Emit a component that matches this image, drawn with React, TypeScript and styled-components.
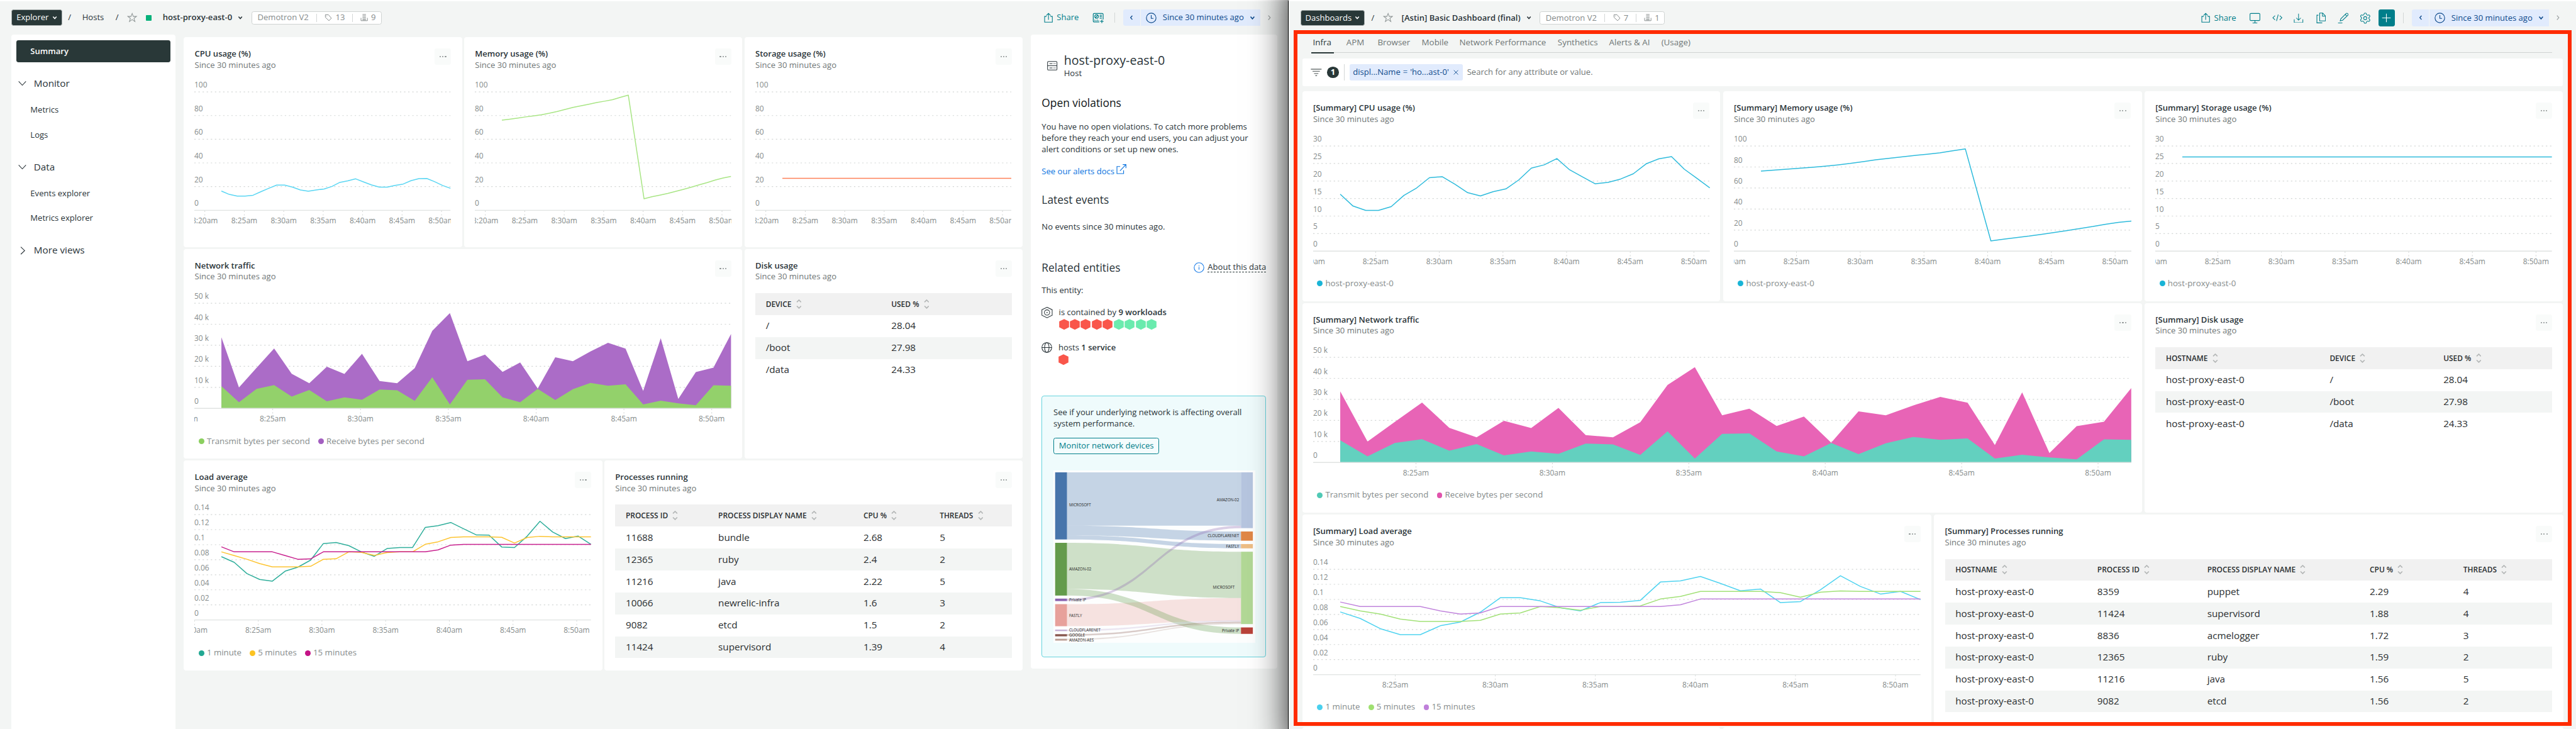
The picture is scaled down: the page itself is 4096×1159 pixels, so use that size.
import React from 'react';
import styled, { createGlobalStyle, css } from 'styled-components';
import { Settings } from 'lucide-react';

/* 1rem is ten design units; the design is 601.4rem wide. */
const Global = createGlobalStyle`
  html { font-size: 6.81077px; }
  body {
    margin: 0;
    font-family: 'Open Sans', 'Noto Sans', 'Liberation Sans', sans-serif;
    font-size: 1.92rem;
    line-height: 2.6rem;
    color: #293338;
    background: #f3f5f4;
  }
  * { box-sizing: border-box; }
  svg { display: block; flex: none; }
`;

const teal = '#007e8a';
const ink = '#293838';
const canvas = '#f3f5f4';

/* ---------- page shell ---------- */

const Page = styled.div`
  display: flex;
  width: 4096px;
  height: 1159px;
  overflow: hidden;
  background: ${canvas};
`;

const LeftWindow = styled.section`
  flex: none;
  width: 300.7rem;
  height: 100%;
  border-top: 0.4rem solid #fff;
  display: flex;
  flex-direction: column;
`;

const RightWindow = styled.section`
  position: relative;
  z-index: 1;
  width: 300.7rem;
  height: 100%;
  background: ${canvas};
  border-top: 0.4rem solid #fff;
  border-left: 1px solid #000;
  display: flex;
  flex-direction: column;
  &::before {
    content: '';
    position: absolute;
    z-index: -1;
    top: -5rem;
    bottom: -5rem;
    left: 0;
    right: 0;
    box-shadow: 0 0 8rem rgba(0, 0, 0, 0.88);
  }
  &::after {
    content: '';
    position: absolute;
    z-index: -1;
    inset: 0;
    background: ${canvas};
  }
`;

const Header = styled.header<{ $h: number; $pt?: number; $pl: number }>`
  flex: none;
  height: ${p => p.$h}rem;
  padding: ${p => p.$pt || 0}rem 0 0 ${p => p.$pl}rem;
  display: flex;
  align-items: center;
`;

const Slot = styled.div<{ $w: number; $strong?: boolean }>`
  flex: none;
  width: ${p => p.$w}rem;
  display: flex;
  align-items: center;
  white-space: nowrap;
  font-weight: ${p => (p.$strong ? 600 : 400)};
`;

const NavButton = styled.button<{ $w: number; $gap: number }>`
  flex: none;
  width: ${p => p.$w}rem;
  height: 3.8rem;
  margin-right: ${p => p.$gap}rem;
  padding: 0 1rem;
  display: flex;
  align-items: center;
  justify-content: space-between;
  font: inherit;
  color: #fff;
  background: ${ink};
  border: 0.16rem solid #a9b0b0;
  border-radius: 0.5rem;
`;

const Status = styled.i`
  width: 1.36rem;
  height: 1.3rem;
  background: #06b17a;
  border-radius: 0.15rem;
`;

const MetaBox = styled.div<{ $w: number }>`
  flex: none;
  width: ${p => p.$w}rem;
  height: 3.1rem;
  padding-left: 1.3rem;
  display: flex;
  align-items: center;
  color: #858b8b;
  background: #fff;
  border: 0.14rem solid #d0d4d3;
  border-radius: 0.5rem;
`;

const Rule = styled.i<{ $h: number; $slot: number }>`
  flex: none;
  width: 1px;
  height: ${p => p.$h}rem;
  margin-right: calc(${p => p.$slot}rem - 1px);
  background: #d3d7d6;
`;

const Tools = styled.div`
  margin-left: auto;
  display: flex;
  align-items: center;
  color: ${teal};
`;

const AddButton = styled.button`
  width: 3.8rem;
  height: 3.85rem;
  margin-right: 1.96rem;
  padding: 0;
  display: grid;
  place-items: center;
  color: #fff;
  background: ${teal};
  border: 0;
  border-radius: 0.5rem;
`;

const Picker = styled.div`
  width: 31.9rem;
  height: 3.9rem;
  display: flex;
  color: #0d4a8c;
  border-radius: 0.5rem 0 0 0.5rem;
  overflow: hidden;
`;
const PickerStep = styled.div`
  width: 3.85rem;
  margin-right: 0.2rem;
  display: grid;
  place-items: center;
  background: #e1ebfd;
`;
const PickerRange = styled.div`
  flex: 1;
  padding-left: 1.2rem;
  display: flex;
  align-items: center;
  background: #e1ebfd;
`;
const NextStep = styled.div<{ $w: number }>`
  width: ${p => p.$w}rem;
  padding-left: 1.5rem;
  color: #9a9f9f;
`;

/* ---------- icons ---------- */

type Ic = { w: number; h?: number; box?: string; sw?: number; children: React.ReactNode };
const Icon = ({ w, h, box = '0 0 24 24', sw = 1.6, children }: Ic) => (
  <svg width={`${w / 10}rem`} height={`${(h || w) / 10}rem`} viewBox={box} fill="none" stroke="currentColor" strokeWidth={sw}>
    {children}
  </svg>
);
const Caret = ({ w = 12 }) => (
  <Icon w={w} box="0 0 12 12" sw={2.2}><path d="M2 3.5l4 4.6 4-4.6" /></Icon>
);
const Star = () => (
  <Icon w={24} sw={1.5}><path d="M12 2l2.7 7h7.4l-6 4.6 2.3 7.4-6.4-4.6L5.6 21l2.3-7.4-6-4.6h7.4z" stroke="#8f9696" /></Icon>
);
const Tag = () => (
  <Icon w={18} box="0 0 18 18" sw={1.4}><path d="M2 2h7l7 8.2L10.4 16 2 8.2z" /><circle cx="5.4" cy="5.2" r=".8" fill="currentColor" stroke="none" /></Icon>
);
const Building = () => (
  <Icon w={18} box="0 0 18 18" sw={1.4}><path d="M5 1.5h8M5 4.8h8M5 8.1h8M5 11.4h8M1.5 9.5V16h15V9.5M5 14h8" /></Icon>
);
const Share = () => (
  <Icon w={21} h={24} box="0 0 21 24"><path d="M6 9H1.5v13.5h18V9H15M10.5 17V2M5.5 6.8l5-5 5 5" /></Icon>
);
const AddToDashboard = () => (
  <Icon w={27} h={25} box="0 0 27 25" sw={1.8}>
    <path d="M16 22H4a2 2 0 01-2-2V4a2 2 0 012-2h19a2 2 0 012 2v12M22 16.5v8M18 20.5h8M17 6h5M17 9.5h5M17 13h5M5.5 19.5v-3M8.5 19.5v-1.5M11.5 19.5v-3M14.5 19.5v-1.5" />
    <circle cx="9.7" cy="9" r="4.2" /><path d="M7 12l5.5-6" />
  </Icon>
);
const Clock = () => (
  <Icon w={25}><circle cx="12" cy="12" r="10.8" /><path d="M12 5.5V13h5" /></Icon>
);
const Monitor = () => (
  <Icon w={26} box="0 0 26 26"><rect x="1" y="2" width="23" height="16.5" rx="2" /><path d="M12.5 18.5V24M7 24.2h11" /></Icon>
);
const Code = () => (
  <Icon w={24}><path d="M6.5 7l-5 5 5 5M17.5 7l5 5-5 5M14 4.5l-4 15" /></Icon>
);
const Download = () => (
  <Icon w={23}><path d="M1.500 15v8h21v-8M12 1v16M6.500 11.500L12 17l5.500-5.500" /></Icon>
);
const Copy = () => (
  <Icon w={23} h={25} box="0 0 23 25"><path d="M8 1h7l6.500 7v11.500H8zM14.500 1v7.500h7M5 6H1.500v18H14" /></Icon>
);
const Pencil = () => (
  <Icon w={26} box="0 0 26 26"><path d="M6 19.500l1.500-5L20 2.200a2 2 0 013 0l1 1a2 2 0 010 2.800L11.500 18zM18 4.500l4 4M1 24.300h10" /></Icon>
);
const Plus = () => (
  <Icon w={22} box="0 0 22 22"><path d="M11 1v20M1 11h20" /></Icon>
);
const StepLeft = () => (
  <Icon w={12} box="0 0 12 12" sw={2}><path d="M8 1.500L4 6l4 4.500" /></Icon>
);
const StepRight = () => (
  <Icon w={12} box="0 0 12 12" sw={1.7}><path d="M4 1l4.500 5L4 11" /></Icon>
);
const GroupOpen = () => (
  <Icon w={19} box="0 0 19 19"><path d="M1 5l8.500 9L18 5" /></Icon>
);
const GroupClosed = () => (
  <Icon w={19} box="0 0 19 19"><path d="M6 1l9 8.500L6 18" /></Icon>
);
const HostIcon = () => (
  <Icon w={24} h={22} box="0 0 24 22" sw={1.5}>
    <rect x="1" y="1" width="22" height="20" rx="2" /><path d="M1 11h22M5.500 6.200h7M15 6.200h1.800M18 6.200h1.800M5.500 16h7M15 16h1.800M18 16h1.800" />
  </Icon>
);
const External = () => (
  <Icon w={24} sw={1.7}><path d="M9 5.500H1.500V22H17v-7.500M15 1h7.500v8M22.500 1L8.500 15.500" /></Icon>
);
const Info = () => (
  <Icon w={25}><circle cx="12" cy="12" r="10.900" /><path d="M12 10.500v6M12 7v1.800" /></Icon>
);
const Workload = () => (
  <Icon w={26} box="0 0 26 26" sw={1.5}><path d="M13 .8l12 5.700v13L13 25.200 1 19.500v-13z" /><circle cx="13" cy="13" r="6.200" /><circle cx="13" cy="13" r="1.400" fill="currentColor" stroke="none" /></Icon>
);
const Globe = () => (
  <Icon w={25} sw={1.5}><circle cx="12" cy="12" r="11" /><ellipse cx="12" cy="12" rx="5" ry="11" /><path d="M1 12h22" /></Icon>
);
const Hex = ({ color }: { color: string }) => (
  <svg width="2.36rem" height="2.56rem" viewBox="0 0 23.6 25.6"><path d="M11.800 .3l11.500 5.700v13.600l-11.500 5.700L.3 19.600V6z" fill={color} /></svg>
);
const Filter = () => (
  <Icon w={26} h={18} box="0 0 26 18" sw={1.9}><path d="M.5 1.500h25M4.500 6.500h17M8 11.500h10M11 16.500h4" /></Icon>
);
const Close = () => (
  <Icon w={12} box="0 0 12 12" sw={1.3}><path d="M1 1l10 10M11 1L1 11" /></Icon>
);
const Sort = () => (
  <Icon w={13} h={22} box="0 0 13 22" sw={2.4}><g stroke="#b3b6b6"><path d="M1.500 6.500l5-5 5 5M1.500 15.500l5 5 5-5" /></g></Icon>
);

/* ---------- cards ---------- */

const Row = styled.div<{ $h: number; $gap: number }>`
  flex: none;
  display: flex;
  height: ${p => p.$h}rem;
  gap: ${p => p.$gap}rem;
`;
const CardBox = styled.article<{ $w: number }>`
  flex: none;
  width: ${p => p.$w}rem;
  padding: 2.6rem 2.54rem 0;
  background: #fff;
  border-radius: 0.6rem;
  overflow: hidden;
`;
const CardHead = styled.div`
  height: 5.2rem;
  display: flex;
  justify-content: space-between;
`;
const CardTitle = styled.h3`
  margin: 0;
  font-size: 1.92rem;
  font-weight: 600;
`;
const CardSub = styled.div`
  color: #6f7676;
`;
const MenuButton = styled.button`
  width: 3.84rem;
  height: 3.84rem;
  padding: 0;
  border: 0;
  border-radius: 0.5rem;
  background: #f9fbfa;
  display: flex;
  align-items: center;
  justify-content: center;
  gap: 0.32rem;
`;
const MenuDot = styled.i`
  width: 0.32rem;
  height: 0.32rem;
  border-radius: 50%;
  background: #8a9090;
`;

const Card = ({ w, title, children }: { w: number; title: string; children: React.ReactNode }) => (
  <CardBox $w={w / 10}>
    <CardHead>
      <div>
        <CardTitle>{title}</CardTitle>
        <CardSub>Since 30 minutes ago</CardSub>
      </div>
      <MenuButton><MenuDot /><MenuDot /><MenuDot /></MenuButton>
    </CardHead>
    {children}
  </CardBox>
);

const LegendRow = styled.div`
  height: 2.6rem;
  margin-top: 2.36rem;
  padding-left: 0.96rem;
  display: flex;
  align-items: center;
  gap: 1.96rem;
  font-size: 1.95rem;
  color: #858b8b;
`;
const LegendItem = styled.span`
  display: flex;
  align-items: center;
  gap: 0.6rem;
`;
const LegendDot = styled.i<{ $c: string }>`
  width: 1.3rem;
  height: 1.3rem;
  border-radius: 50%;
  background: ${p => p.$c};
`;
const Legend = ({ items }: { items: [string, string][] }) => (
  <LegendRow>
    {items.map(([c, t]) => (
      <LegendItem key={t}><LegendDot $c={c} />{t}</LegendItem>
    ))}
  </LegendRow>
);

/* ---------- charts ---------- */

/* Samples become fractions of the value axis. */
const series = (zero: number, full: number, ys: number[]) => ys.map(y => (zero - y) / (zero - full));
const tail = (n: number, v: number) => Array(n).fill(v) as number[];

const hostCpu = series(1241, 541, [1127, 1147, 1157, 1157, 1152, 1131, 1111, 1092, 1092, 1104, 1121, 1128, 1121, 1115, 1100, 1076, 1067, 1055, 1073, 1091, 1104, 1104, 1094, 1086, 1066, 1054, 1053, 1072, 1094, 1111]);
const boardCpu = series(1279, 745, [990, 1050, 1072, 1072, 1053, 996, 958, 906, 901, 939, 982, 999, 977, 963, 918, 857, 841, 809, 866, 902, 937, 930, 913, 886, 836, 810, 799, 863, 910, 958]);
const memory = series(1241, 541, [708, 702, 696, 689, 683, 676, 667, 657, 645, 633, 623, 614, 604, 596, 587, 573, 560, 867, 1173, 1161, 1151, 1141, 1129, 1117, 1104, 1090, 1077, 1062, 1050, 1041]);
const hostStorage = tail(30, 0.27);
const boardStorage = tail(30, 0.896);
const receive = series(1122, 385, [624, 975, 838, 702, 879, 946, 830, 881, 739, 930, 946, 840, 578, 454, 791, 745, 866, 800, 983, 764, 791, 723, 662, 703, 1000, 630, 1056, 867, 836, 601]);
const transmit = series(1122, 385, [966, 1079, 985, 959, 1039, 993, 1072, 1045, 1062, 990, 995, 1069, 904, 1094, 921, 918, 1045, 1079, 985, 1064, 988, 943, 963, 953, 1094, 1068, 1087, 1100, 960, 963]);
const hostLoad = [
  series(940, 329, [573, 606, 671, 705, 715, 657, 634, 593, 497, 491, 509, 546, 571, 526, 520, 520, 403, 393, 375, 411, 447, 448, 517, 520, 454, 368, 430, 468, 454, 501]),
  series(940, 329, [545, 567, 588, 613, 632, 632, 632, 629, 588, 585, 545, 548, 566, 549, 545, 545, 501, 487, 462, 458, 458, 458, 461, 494, 462, 455, 458, 458, 458, 458]),
  series(940, 329, [516, ...tail(4, 545), 567, 588, 586, ...tail(9, 545), 534, 506, ...tail(11, 502)]),
];
const boardLoad = [
  series(1160, 423, [721, 767, 838, 880, 880, 818, 792, 723, 622, 622, 644, 692, 714, 656, 653, 640, 512, 504, 473, 522, 573, 561, 656, 649, 566, 468, 543, 596, 578, 635]),
  series(1160, 423, [683, 714, 736, 771, 788, 788, 788, 780, 736, 728, 683, 692, 709, 683, 683, 679, 631, 613, 578, 578, 578, 578, 587, 618, 583, 574, 578, 578, 578, 578]),
  series(1160, 423, [652, ...tail(4, 683), 714, 736, 728, ...tail(9, 683), 671, ...tail(12, 631)]),
];

const ChartText = styled.text`
  font-size: 17.6px;
  fill: #858b8b;
`;
const times = ['8:20am', '8:25am', '8:30am', '8:35am', '8:40am', '8:45am', '8:50am'];

type ChartProps = {
  w: number;
  axis: number;
  labels: string[];
  tick0: number;
  step: number;
  lines: { data: number[]; color: string }[];
  area?: boolean;
};
const Chart = ({ w, axis, labels, tick0, step, lines, area }: ChartProps) => {
  const top = 48.6;
  const start = 63.2;
  const h = axis + 40;
  const gap = (axis - top) / (labels.length - 1);
  /* The first time label is left out once it would lie wholly before the plot. */
  const ticks = times.map((t, i) => ({ t, x: tick0 + step * i })).filter(({ x }) => x > -31);
  const points = (d: number[]) =>
    d.map((v, i) => `${(start + (i * (w - start)) / (d.length - 1)).toFixed(1)},${(axis - v * (axis - top)).toFixed(1)}`).join(' ');
  return (
    <svg width={`${w / 10}rem`} height={`${h / 10}rem`} viewBox={`0 0 ${w} ${h}`}>
      {labels.slice(0, -1).map((l, i) => (
        <line key={l} x1="0" x2={w} y1={top + gap * i} y2={top + gap * i} stroke="#d4d7d6" strokeWidth="1.7" strokeDasharray="3.2 6.4" />
      ))}
      {lines.map(({ data, color }) =>
        area ? (
          <polygon key={color} points={`${start},${axis} ${points(data)} ${w},${axis}`} fill={color} />
        ) : (
          <polyline key={color} points={points(data)} fill="none" stroke={color} strokeWidth="2.2" strokeLinejoin="round" />
        )
      )}
      <line x1="0" x2={w} y1={axis} y2={axis} stroke="#e0e3e2" strokeWidth="2" />
      {labels.map((l, i) => (
        <ChartText key={l} x="0" y={top + gap * i - 10.2}>{l}</ChartText>
      ))}
      {ticks.map(({ t, x }) => (
        <g key={t}>
          <path d={`M${x} ${axis + 1}v3M${x} ${axis + 9}v3`} stroke="#d4d7d6" strokeWidth="1.5" />
          <ChartText x={x} y={axis + 29.8} textAnchor="middle">{t}</ChartText>
        </g>
      ))}
    </svg>
  );
};

const percent = ['100', '80', '60', '40', '20', '0'];
const thirty = ['30', '25', '20', '15', '10', '5', '0'];
const bytes = ['50 k', '40 k', '30 k', '20 k', '10 k', '0'];
const loads = ['0.14', '0.12', '0.1', '0.08', '0.06', '0.04', '0.02', '0'];

/* ---------- tables ---------- */

const TableBox = styled.div`
  margin-top: 2.5rem;
`;
const Cells = styled.div<{ $cols: string; $head?: boolean; $striped?: boolean }>`
  display: grid;
  grid-template-columns: ${p => p.$cols};
  align-items: center;
  height: 5.116rem;
  padding-left: 2.45rem;
  font-size: 2.24rem;
  color: #2a2e30;
  white-space: nowrap;
  ${p => p.$striped && css`background: ${canvas};`}
  ${p => p.$head && css`
    font-size: 1.755rem;
    font-weight: 600;
    background: #f1f1f1;
  `}
`;
const HeadCell = styled.div`
  display: flex;
  align-items: center;
  gap: 1.05rem;
`;
const Table = ({ cols, head, rows }: { cols: string; head: string[]; rows: string[][] }) => (
  <TableBox>
    <Cells $cols={cols} $head>
      {head.map(h => <HeadCell key={h}>{h}<Sort /></HeadCell>)}
    </Cells>
    {rows.map((r, i) => (
      <Cells key={i} $cols={cols} $striped={i % 2 === 1}>
        {r.map((c, j) => <div key={j}>{c}</div>)}
      </Cells>
    ))}
  </TableBox>
);

/* ---------- left window ---------- */

const LeftBody = styled.div`
  flex: 1;
  min-height: 0;
  display: flex;
  align-items: flex-start;
  padding-left: 2.6rem;
`;
const Sidebar = styled.nav`
  flex: none;
  width: 38.4rem;
  height: 164rem;
  margin-top: 0.1rem;
  padding: 1.3rem 1.2rem;
  background: #fff;
  border-radius: 0.6rem;
`;
const Active = styled.div`
  height: 5.1rem;
  line-height: 5.1rem;
  padding-left: 3.3rem;
  font-weight: 600;
  color: #fff;
  background: ${ink};
  border-radius: 0.5rem;
`;
const Group = styled.div<{ $mt: number }>`
  height: 6rem;
  margin: ${p => p.$mt}rem 0 0.3rem;
  padding-left: 0.5rem;
  display: flex;
  align-items: center;
  gap: 1.7rem;
  font-size: 2.24rem;
`;
const NavLink = styled.div`
  height: 5.8rem;
  line-height: 5.8rem;
  padding-left: 3.3rem;
`;
const LeftGrid = styled.div`
  flex: none;
  width: 195.9rem;
  margin: 0.74rem 1.8rem 0 1.9rem;
  display: flex;
  flex-direction: column;
  gap: 0.44rem;
`;

const Panel = styled.aside`
  flex: none;
  width: 57.6rem;
  height: 148rem;
  margin-top: 0.1rem;
  padding: 3.8rem 2.6rem 0;
  background: #fff;
  border-radius: 0.6rem;
`;
const Entity = styled.div`
  display: flex;
  align-items: center;
  gap: 1.5rem;
  padding-left: 1.3rem;
  height: 7rem;
`;
const EntityName = styled.div`
  font-size: 2.88rem;
  line-height: 3.6rem;
`;
const PanelTitle = styled.h2<{ $mt: number; $dark?: boolean }>`
  margin: ${p => p.$mt}rem 0 0;
  font-size: 2.55rem;
  line-height: 3.6rem;
  font-weight: ${p => (p.$dark ? 500 : 400)};
  color: ${p => (p.$dark ? '#0e1416' : 'inherit')};
`;
const Para = styled.p<{ $mt: number }>`
  margin: ${p => p.$mt}rem 0 0;
  white-space: nowrap;
`;
const DocsLink = styled.a`
  margin-top: 2.55rem;
  height: 2.6rem;
  display: flex;
  align-items: center;
  gap: 0.5rem;
  color: #0c74df;
  svg { margin-bottom: 0.9rem; }
`;
const Split = styled.div`
  display: flex;
  justify-content: space-between;
  align-items: center;
  margin-top: 6.3rem;
`;
const About = styled.span`
  display: flex;
  align-items: center;
  gap: 0.8rem;
  svg { color: #1f7fe8; }
`;
const Dotted = styled.span`
  height: 2.3rem;
  line-height: 2.3rem;
  border-bottom: 1px dashed ${ink};
`;
const Relation = styled.div<{ $mt: number }>`
  margin-top: ${p => p.$mt}rem;
  display: flex;
  gap: 1.4rem;
  b { font-weight: 600; }
`;
const HexRow = styled.div`
  display: flex;
  gap: 0.2rem;
  margin-top: 0.25rem;
`;
const Promo = styled.div`
  height: 61rem;
  margin-top: 7.15rem;
  padding: 2.5rem 2.6rem 0;
  background: #effbfc;
  border: 0.15rem solid #66d3dd;
  border-radius: 0.6rem;
`;
const OutlineButton = styled.button`
  display: block;
  margin: 2rem 0 3.8rem;
  height: 3.8rem;
  width: 24.7rem;
  padding: 0;
  font: inherit;
  color: ${teal};
  background: #f3fcfd;
  border: 0.16rem solid ${teal};
  border-radius: 0.5rem;
`;
const SankeyText = styled.text`
  font-size: 9.1px;
  fill: #222;
`;

const flow = (a: number, b: number, c: number, d: number) =>
  `M315 ${a}C770 ${a} 770 ${c} 1225 ${c}V${d}C770 ${d} 770 ${b} 315 ${b}Z`;

const Sankey = () => {
  const X = (x: number) => (x - 244) * 0.4464;
  const Y = (y: number) => (y - 727) * 0.7156 + 3.2;
  const left: [number, number, string][] = [[733, 952, '#4775ab'], [963, 1135, '#649b4c'], [1145, 1153, '#8a63b0'], [1163, 1235, '#e7a19b'], [1246, 1251, '#c5b0d5'], [1261, 1268, '#87564c'], [1276, 1282, '#bb9f95']];
  const right: [number, number, string][] = [[733, 915, '#b6c5df'], [926, 956, '#e08747'], [967, 981, '#edbd85'], [992, 1228, '#b2d896'], [1239, 1260, '#b94239']];
  const links: [number, number, number, number, string][] = [
    [733, 907, 733, 907, '#4775ab'], [907, 939, 926, 956, '#4775ab'], [939, 952, 967, 981, '#4775ab'],
    [963, 1114, 992, 1143, '#649b4c'], [1163, 1235, 1143, 1217, '#e7a19b'], [1114, 1135, 1239, 1260, '#649b4c'],
    [1145, 1153, 907, 915, '#8a63b0'], [1246, 1251, 1216, 1220, '#c5b0d5'], [1261, 1266, 1220, 1225, '#87564c'], [1276, 1280, 1225, 1228, '#bb9f95'],
  ];
  const names: [number, string][] = [[839, 'MICROSOFT'], [1049, 'AMAZON-02'], [1149, 'Private IP'], [1200, 'FASTLY'], [1248, 'CLOUDFLARENET'], [1264, 'GOOGLE'], [1280, 'AMAZON-AES']];
  const ends: [number, number, string][] = [[1215, 824, 'AMAZON-02'], [1215, 941, 'CLOUDFLARENET'], [1215, 974, 'FASTLY'], [1192, 1109, 'MICROSOFT'], [1215, 1249, 'Private IP']];
  return (
    <svg width="47.1rem" height="40.3rem" viewBox="0 0 471 403">
      <rect width="471" height="403" fill="#fdfefe" />
      <g transform="scale(.4464 .7156) translate(-244 -727)">
        {links.map(l => <path key={l.join()} d={flow(l[0], l[1], l[2], l[3])} fill={l[4]} fillOpacity=".3" />)}
        {left.map(([a, b, c]) => <rect key={a} x="253" y={a} width="62" height={b - a} fill={c} />)}
        {right.map(([a, b, c]) => <rect key={a} x="1225" y={a} width="62" height={b - a} fill={c} />)}
      </g>
      {names.map(([y, t]) => <SankeyText key={t} x={X(326)} y={Y(y)}>{t}</SankeyText>)}
      {ends.map(([x, y, t]) => <SankeyText key={t} x={X(x)} y={Y(y)} textAnchor="end">{t}</SankeyText>)}
    </svg>
  );
};

const DatePicker = () => (
  <Picker>
    <PickerStep><StepLeft /></PickerStep>
    <PickerRange>
      <Slot $w={3.9}><Clock /></Slot>
      <Slot $w={20.3}>Since 30 minutes ago</Slot>
      <Caret w={13} />
    </PickerRange>
  </Picker>
);

const HostView = () => (
  <LeftWindow>
    <Header $h={7.7} $pl={2.7}>
      <NavButton $w={11.8} $gap={1.4}>Explorer<Caret /></NavButton>
      <Slot $w={3.3}>/</Slot>
      <Slot $w={7.8}>Hosts</Slot>
      <Slot $w={2.7}>/</Slot>
      <Slot $w={4.4}><Star /></Slot>
      <Slot $w={3.9}><Status /></Slot>
      <Slot $w={17.5} $strong>host-proxy-east-0</Slot>
      <Slot $w={3.2}><Caret /></Slot>
      <MetaBox $w={30.4}>
        <Slot $w={13.7}>Demotron V2</Slot>
        <Rule $h={1.9} $slot={1.9} />
        <Slot $w={2.6}><Tag /></Slot>
        <Slot $w={3.9}>13</Slot>
        <Rule $h={1.9} $slot={1.9} />
        <Slot $w={2.5}><Building /></Slot>9
      </MetaBox>
      <Tools>
        <Slot $w={2.9}><Share /></Slot>
        <Slot $w={8.4}>Share</Slot>
        <Slot $w={5.1}><AddToDashboard /></Slot>
        <Rule $h={2.4} $slot={2.1} />
        <DatePicker />
        <NextStep $w={6.5}><StepRight /></NextStep>
      </Tools>
    </Header>
    <LeftBody>
      <Sidebar>
        <Active>Summary</Active>
        <Group $mt={2}><GroupOpen />Monitor</Group>
        <NavLink>Metrics</NavLink>
        <NavLink>Logs</NavLink>
        <Group $mt={1.6}><GroupOpen />Data</Group>
        <NavLink>Events explorer</NavLink>
        <NavLink>Metrics explorer</NavLink>
        <Group $mt={1.6}><GroupClosed />More views</Group>
      </Sidebar>
      <LeftGrid>
        <Row $h={48.96} $gap={0.5}>
          <Card w={649.5} title="CPU usage (%)">
            <Chart w={598} axis={325} labels={percent} tick0={24.5} step={92.1} lines={[{ data: hostCpu, color: '#5ad6f3' }]} />
          </Card>
          <Card w={649.5} title="Memory usage (%)">
            <Chart w={598} axis={325} labels={percent} tick0={24.5} step={92.1} lines={[{ data: memory, color: '#a8e584' }]} />
          </Card>
          <Card w={650} title="Storage usage (%)">
            <Chart w={598} axis={325} labels={percent} tick0={24.5} step={92.1} lines={[{ data: hostStorage, color: '#fd8158' }]} />
          </Card>
        </Row>
        <Row $h={48.96} $gap={0.5}>
          <Card w={1304} title="Network traffic">
            <Chart w={1253} axis={294} labels={bytes} tick0={-22} step={205} area lines={[{ data: receive, color: '#ab6cc7' }, { data: transmit, color: '#93d16b' }]} />
            <Legend items={[['#8bcf5f', 'Transmit bytes per second'], ['#a35fc0', 'Receive bytes per second']]} />
          </Card>
          <Card w={650} title="Disk usage">
            <Table cols="29.3rem 1fr" head={['DEVICE', 'USED %']} rows={[['/', '28.04'], ['/boot', '27.98'], ['/data', '24.33']]} />
          </Card>
        </Row>
        <Row $h={49} $gap={0.5}>
          <Card w={977} title="Load average">
            <Chart w={926} axis={294.6} labels={loads} tick0={0.5} step={148.7} lines={[{ data: hostLoad[0], color: '#2fae9b' }, { data: hostLoad[1], color: '#fdc431' }, { data: hostLoad[2], color: '#c8208e' }]} />
            <Legend items={[['#22a893', '1 minute'], ['#fcc322', '5 minutes'], ['#c41386', '15 minutes']]} />
          </Card>
          <Card w={977} title="Processes running">
            <Table
              cols="21.6rem 33.9rem 17.8rem 1fr"
              head={['PROCESS ID', 'PROCESS DISPLAY NAME', 'CPU %', 'THREADS']}
              rows={[
                ['11688', 'bundle', '2.68', '5'],
                ['12365', 'ruby', '2.4', '2'],
                ['11216', 'java', '2.22', '5'],
                ['10066', 'newrelic-infra', '1.6', '3'],
                ['9082', 'etcd', '1.5', '2'],
                ['11424', 'supervisord', '1.39', '4'],
              ]}
            />
          </Card>
        </Row>
      </LeftGrid>
      <Panel>
        <Entity>
          <HostIcon />
          <div><EntityName>host-proxy-east-0</EntityName>Host</div>
        </Entity>
        <PanelTitle $mt={3.3} $dark>Open violations</PanelTitle>
        <Para $mt={2.6}>
          You have no open violations. To catch more problems<br />before they reach your end users, you can adjust your<br />alert conditions or set up new ones.
        </Para>
        <DocsLink>See our alerts docs<External /></DocsLink>
        <PanelTitle $mt={3.5}>Latest events</PanelTitle>
        <Para $mt={3.3}>No events since 30 minutes ago.</Para>
        <Split>
          <PanelTitle $mt={0}>Related entities</PanelTitle>
          <About><Info /><Dotted>About this data</Dotted></About>
        </Split>
        <Para $mt={2.3}>This entity:</Para>
        <Relation $mt={2.5}>
          <Workload />
          <div>
            is contained by <b>9 workloads</b>
            <HexRow>
              {[0, 1, 2, 3, 4, 5, 6, 7, 8].map(i => <Hex key={i} color={i < 5 ? '#f9564b' : '#6aebae'} />)}
            </HexRow>
          </div>
        </Relation>
        <Relation $mt={2.8}>
          <Globe />
          <div>
            hosts <b>1 service</b>
            <HexRow><Hex color="#f9564b" /></HexRow>
          </div>
        </Relation>
        <Promo>
          See if your underlying network is affecting overall<br />system performance.
          <OutlineButton>Monitor network devices</OutlineButton>
          <Sankey />
        </Promo>
      </Panel>
    </LeftBody>
  </LeftWindow>
);

/* ---------- right window ---------- */

const Frame = styled.main`
  flex: none;
  width: 298.4rem;
  height: 162.5rem;
  margin-left: 1.2rem;
  border: 0.98rem solid #ff2b00;
  overflow: hidden;
`;
const Tabs = styled.div`
  width: 289.6rem;
  height: 4.5rem;
  margin-left: 3.24rem;
  display: flex;
  font-size: 1.968rem;
  color: #6f7676;
  border-bottom: 0.2rem solid #cfd3d2;
`;
const Tab = styled.div<{ $w: number; $active?: boolean }>`
  flex: none;
  width: ${p => p.$w}rem;
  height: 4.56rem;
  padding-left: 0.35rem;
  line-height: 4rem;
  white-space: nowrap;
  ${p => p.$active && css`
    color: ${ink};
    border-bottom: 0.3rem solid ${ink};
    margin-right: 2.6rem;
  `}
`;
const FilterBar = styled.div`
  height: 6.4rem;
  width: 294.3rem;
  margin: 1.3rem 0 1.28rem 1.1rem;
  padding-left: 2rem;
  display: flex;
  align-items: center;
  background: #fff;
  border-radius: 0.4rem;
  color: #6f7676;
`;
const Count = styled.span`
  width: 2.7rem;
  height: 2.6rem;
  margin: 0 1.24rem;
  border-radius: 50%;
  text-align: center;
  font-weight: 700;
  color: #fff;
  background: ${ink};
`;
const Chip = styled.div`
  width: 26.3rem;
  height: 3.8rem;
  margin-right: 1.05rem;
  padding: 0 0.9rem 0 0.7rem;
  display: flex;
  align-items: center;
  justify-content: space-between;
  white-space: nowrap;
  color: #0d4a8c;
  background: #e1ebfd;
  border-radius: 0.4rem;
`;
const Equals = styled.span`
  margin: 0 -0.5rem;
  opacity: 0.7;
`;
const RightGrid = styled.div`
  width: 294.4rem;
  margin-left: 1.1rem;
  display: flex;
  flex-direction: column;
  gap: 0.46rem;
`;
const NextRow = styled.div`
  flex: none;
  height: 1rem;
  margin: 0.27rem 2.9rem 0 3.2rem;
  display: flex;
  gap: 0.6rem;
`;
const Peek = styled.div<{ $w: number }>`
  width: ${p => p.$w}rem;
  background: #fff;
  border-radius: 0.6rem;
`;

const host = 'host-proxy-east-0';
const cyan: [string, string][] = [['#19b4d6', host]];

const DashboardView = () => (
  <RightWindow>
    <Header $h={6.7} $pt={1.1} $pl={2.75}>
      <NavButton $w={15} $gap={1.55}>Dashboards<Caret /></NavButton>
      <Slot $w={2.7}>/</Slot>
      <Slot $w={4.38}><Star /></Slot>
      <Slot $w={29.1} $strong>[Astin] Basic Dashboard (final)</Slot>
      <Slot $w={3.1}><Caret /></Slot>
      <MetaBox $w={29.2}>
        <Slot $w={13.7}>Demotron V2</Slot>
        <Rule $h={1.9} $slot={2} />
        <Slot $w={2.5}><Tag /></Slot>
        <Slot $w={2.8}>7</Slot>
        <Rule $h={1.9} $slot={2} />
        <Slot $w={2.5}><Building /></Slot>1
      </MetaBox>
      <Tools>
        <Slot $w={2.98}><Share /></Slot>
        <Slot $w={8.3}>Share</Slot>
        <Slot $w={5.26}><Monitor /></Slot>
        <Slot $w={5.04}><Code /></Slot>
        <Slot $w={5.2}><Download /></Slot>
        <Slot $w={5}><Copy /></Slot>
        <Slot $w={5}><Pencil /></Slot>
        <Slot $w={4.6}><Settings size="2.9rem" strokeWidth={1.3} /></Slot>
        <AddButton><Plus /></AddButton>
        <Rule $h={2.4} $slot={2.1} />
        <DatePicker />
        <NextStep $w={6.35}><StepRight /></NextStep>
      </Tools>
    </Header>
    <Frame>
      <Tabs>
        <Tab $w={5.2} $active>Infra</Tab>
        <Tab $w={7.3}>APM</Tab>
        <Tab $w={10.3}>Browser</Tab>
        <Tab $w={8.8}>Mobile</Tab>
        <Tab $w={22.96}>Network Performance</Tab>
        <Tab $w={12}>Synthetics</Tab>
        <Tab $w={12.2}>Alerts &amp; AI</Tab>
        <Tab $w={8}>(Usage)</Tab>
      </Tabs>
      <FilterBar>
        <Filter />
        <Count>1</Count>
        <Rule $h={3.8} $slot={1.35} />
        <Chip><span>displ...Name</span><Equals>=</Equals><span>'ho...ast-0'</span><Close /></Chip>
        Search for any attribute or value.
      </FilterBar>
      <RightGrid>
        <Row $h={48.94} $gap={0.63}>
          <Card w={976} title="[Summary] CPU usage (%)">
            <Chart w={926} axis={294} labels={thirty} tick0={-2.7} step={148.6} lines={[{ data: boardCpu, color: '#2ebbdc' }]} />
            <Legend items={cyan} />
          </Card>
          <Card w={978} title="[Summary] Memory usage (%)">
            <Chart w={928} axis={294} labels={percent} tick0={-2.7} step={148.8} lines={[{ data: memory, color: '#2ebbdc' }]} />
            <Legend items={cyan} />
          </Card>
          <Card w={977} title="[Summary] Storage usage (%)">
            <Chart w={926} axis={294} labels={thirty} tick0={-2.7} step={148.6} lines={[{ data: boardStorage, color: '#2ebbdc' }]} />
            <Legend items={cyan} />
          </Card>
        </Row>
        <Row $h={48.96} $gap={0.6}>
          <Card w={1960.5} title="[Summary] Network traffic">
            <Chart w={1910} axis={294} labels={bytes} tick0={-78.5} step={318.5} area lines={[{ data: receive, color: '#e864b6' }, { data: transmit, color: '#63d0bf' }]} />
            <Legend items={[['#50c9b5', 'Transmit bytes per second'], ['#e053ac', 'Receive bytes per second']]} />
          </Card>
          <Card w={977} title="[Summary] Disk usage">
            <Table cols="38.24rem 26.54rem 1fr" head={['HOSTNAME', 'DEVICE', 'USED %']} rows={[[host, '/', '28.04'], [host, '/boot', '27.98'], [host, '/data', '24.33']]} />
          </Card>
        </Row>
        <Row $h={49.6} $gap={0.6}>
          <Card w={1469} title="[Summary] Load average">
            <Chart w={1418} axis={294.6} labels={loads} tick0={-42} step={233.6} lines={[{ data: boardLoad[0], color: '#4fd3f0' }, { data: boardLoad[1], color: '#a2e177' }, { data: boardLoad[2], color: '#c083dc' }]} />
            <Legend items={[['#49d0ee', '1 minute'], ['#9fe070', '5 minutes'], ['#bf80da', '15 minutes']]} />
          </Card>
          <Card w={1469} title="[Summary] Processes running">
            <Table
              cols="33.13rem 25.67rem 37.93rem 21.85rem 1fr"
              head={['HOSTNAME', 'PROCESS ID', 'PROCESS DISPLAY NAME', 'CPU %', 'THREADS']}
              rows={[
                [host, '8359', 'puppet', '2.29', '4'],
                [host, '11424', 'supervisord', '1.88', '4'],
                [host, '8836', 'acmelogger', '1.72', '3'],
                [host, '12365', 'ruby', '1.59', '2'],
                [host, '11216', 'java', '1.56', '5'],
                [host, '9082', 'etcd', '1.56', '2'],
              ]}
            />
          </Card>
        </Row>
      </RightGrid>
    </Frame>
    <NextRow><Peek $w={97.6} /><Peek $w={196.2} /></NextRow>
  </RightWindow>
);

export default function App() {
  return (
    <>
      <Global />
      <Page>
        <HostView />
        <DashboardView />
      </Page>
    </>
  );
}
